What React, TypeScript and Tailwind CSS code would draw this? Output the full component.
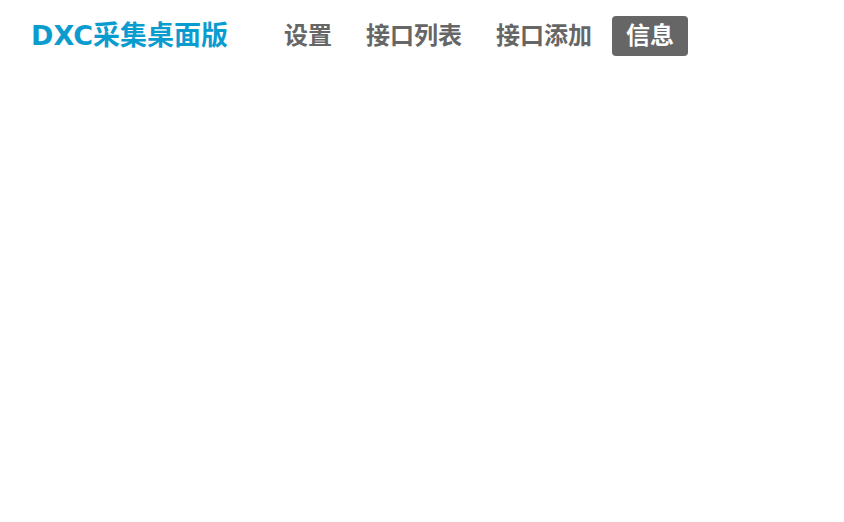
const navItems = ["设置", "接口列表", "接口添加", "信息"];

export default function App() {
  const active = "信息";
  return (
    <div className="min-h-[522px] w-full bg-white font-['DejaVu_Sans','Noto_Sans_CJK_SC',sans-serif]">
      <header className="flex items-center pl-[31px] pt-4">
        <h1 className="text-[27px] font-bold leading-10 text-[#0b9ccf]">
          DXC采集桌面版
        </h1>
        <nav className="ml-[42px] flex gap-[6px]">
          {navItems.map((item) => (
            <a
              key={item}
              href="#"
              className={
                item === active
                  ? "rounded-[4px] bg-[#666666] px-[14px] text-[24px] font-bold leading-10 text-white"
                  : "rounded-[4px] px-[14px] text-[24px] font-bold leading-10 text-[#666666]"
              }
            >
              {item}
            </a>
          ))}
        </nav>
      </header>
    </div>
  );
}
